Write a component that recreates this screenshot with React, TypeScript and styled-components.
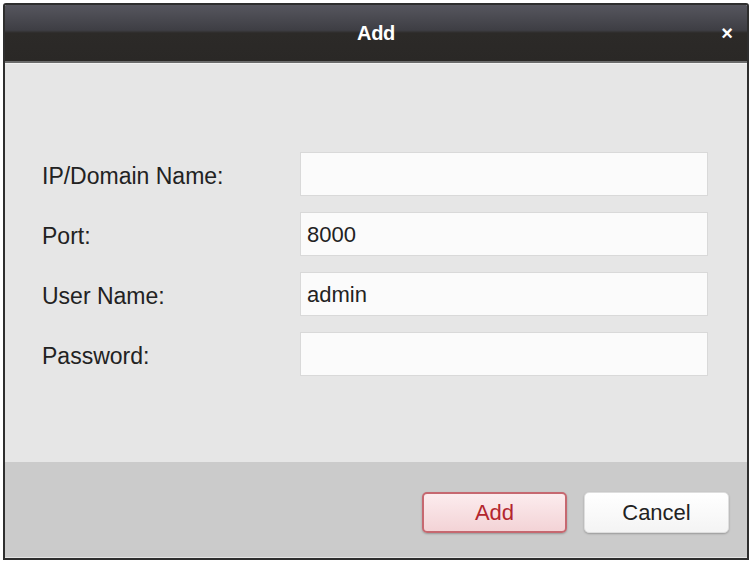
import styled, { createGlobalStyle } from "styled-components";

const GlobalStyle = createGlobalStyle`
  html, body {
    margin: 0;
    padding: 0;
    background: #ffffff;
    font-family: "Liberation Sans", Arial, sans-serif;
  }
`;

const Window = styled.div`
  margin: 3px 0 0 3px;
  width: 742px;
  height: 553px;
  border: 2px solid #2e2e2e;
  border-radius: 3px 3px 0 0;
  display: flex;
  flex-direction: column;
  overflow: hidden;
`;

const TitleBar = styled.div`
  position: relative;
  height: 56px;
  flex-shrink: 0;
  display: flex;
  align-items: center;
  justify-content: center;
  background: linear-gradient(
    to bottom,
    #56565e 0%,
    #3e3e44 45%,
    #2c2a28 50%,
    #2a2826 100%
  );
  border-bottom: 2px solid #6b6b6b;
`;

const Title = styled.div`
  color: #ffffff;
  font-size: 20px;
  font-weight: bold;
  letter-spacing: -0.3px;
`;

const CloseButton = styled.div`
  position: absolute;
  right: 14px;
  top: 18px;
  color: #ffffff;
  font-size: 20px;
  font-weight: bold;
  line-height: 20px;
`;

const Body = styled.div`
  flex: 1;
  background: #e6e6e6;
  border-top: 1px solid #f2f2f2;
  padding: 88px 0 0 37px;
`;

const Form = styled.div`
  display: grid;
  grid-template-columns: 258px 408px;
  grid-auto-rows: 44px;
  row-gap: 16px;
`;

const Label = styled.div`
  display: flex;
  align-items: center;
  padding-top: 4px;
  font-size: 23px;
  color: #222222;
`;

const Field = styled.div`
  box-sizing: border-box;
  display: flex;
  align-items: center;
  padding: 2px 0 0 6px;
  background: #fbfbfb;
  border: 1px solid #d9d9d9;
  font-size: 22px;
  color: #222222;
`;

const Footer = styled.div`
  height: 96px;
  flex-shrink: 0;
  box-sizing: border-box;
  background: #cbcbcb;
  border-bottom: 1px solid #e4e4e4;
  display: flex;
  justify-content: flex-end;
  align-items: flex-start;
  gap: 17px;
  padding: 30px 18px 0 0;
`;

const Button = styled.div<{ $primary?: boolean }>`
  box-sizing: border-box;
  width: 145px;
  height: 41px;
  display: flex;
  align-items: center;
  justify-content: center;
  border-radius: 5px;
  font-size: 22px;
  padding-top: 1px;
  color: ${(p) => (p.$primary ? "#b3262e" : "#222222")};
  background: ${(p) =>
    p.$primary
      ? "linear-gradient(to bottom, #fcecee 0%, #f3d3d6 100%)"
      : "linear-gradient(to bottom, #ffffff 0%, #f4f4f4 100%)"};
  border: ${(p) => (p.$primary ? "2px solid #c66870" : "1px solid #dedede")};
  box-shadow: 0 1px 2px rgba(0, 0, 0, 0.25);
`;

const fields = [
  { label: "IP/Domain Name:", value: "" },
  { label: "Port:", value: "8000" },
  { label: "User Name:", value: "admin" },
  { label: "Password:", value: "" },
];

export default function App() {
  return (
    <>
      <GlobalStyle />
      <Window>
        <TitleBar>
          <Title>Add</Title>
          <CloseButton>×</CloseButton>
        </TitleBar>
        <Body>
          <Form>
            {fields.map((f) => [
              <Label key={f.label + "-l"}>{f.label}</Label>,
              <Field key={f.label + "-f"}>{f.value}</Field>,
            ])}
          </Form>
        </Body>
        <Footer>
          <Button $primary>Add</Button>
          <Button>Cancel</Button>
        </Footer>
      </Window>
    </>
  );
}
